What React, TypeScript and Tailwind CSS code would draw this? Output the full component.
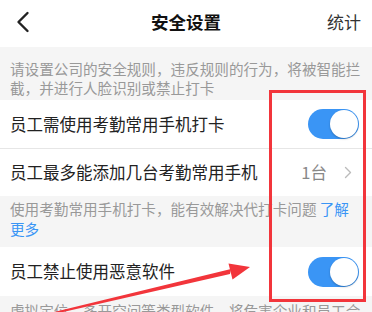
import React from 'react';

const Toggle: React.FC = () => (
  <div className="relative w-[51px] h-[30px] rounded-full bg-[#3a95f5]">
    <div className="absolute right-[1px] top-[1px] w-[28px] h-[28px] rounded-full bg-white shadow-[0_1px_2px_rgba(0,0,0,0.25)]" />
  </div>
);

export default function App() {
  return (
    <div
      className="relative w-[372px] h-[312px] overflow-hidden bg-white"
      style={{ fontFamily: '"Noto Sans CJK SC", "Noto Sans", sans-serif' }}
    >
      {/* Header */}
      <div className="relative h-[47px] flex items-center justify-center">
        <svg className="absolute left-[15px] top-[11px]" width="16" height="22" viewBox="0 0 16 22">
          <path d="M12.5 2 L3.5 11 L12.5 20" fill="none" stroke="#222" strokeWidth="2.4" strokeLinecap="round" strokeLinejoin="round" />
        </svg>
        <div className="text-[17.5px] font-bold text-[#111] leading-none -mt-[3px]">安全设置</div>
        <div className="absolute right-[11px] top-[13px] text-[17px] text-[#333] leading-none">统计</div>
      </div>

      {/* Description */}
      <div className="bg-[#f5f5f5] pl-[10px] pr-[6px] pt-[12px] pb-[3px] text-[14.6px] leading-[19px] text-[#999]">
        请设置公司的安全规则，违反规则的行为，将被智能拦截，并进行人脸识别或禁止打卡
      </div>

      {/* Row 1 */}
      <div className="h-[49px] flex items-center justify-between pl-[10px] pr-[13px] border-b border-[#e6e6e6]">
        <span className="text-[16.5px] text-[#222]">员工需使用考勤常用手机打卡</span>
        <Toggle />
      </div>

      {/* Row 2 */}
      <div className="h-[47px] flex items-center justify-between pl-[10px] pr-[20px]">
        <span className="text-[16.5px] text-[#222]">员工最多能添加几台考勤常用手机</span>
        <div className="flex items-center gap-[17px]">
          <span className="text-[16.5px] text-[#888]">1台</span>
          <svg width="8" height="13" viewBox="0 0 8 13">
            <path d="M1.5 1.5 L6.5 6.5 L1.5 11.5" fill="none" stroke="#bbb" strokeWidth="1.4" strokeLinecap="round" strokeLinejoin="round" />
          </svg>
        </div>
      </div>

      {/* Description 2 */}
      <div className="bg-[#f5f5f5] pl-[10px] pr-[20px] pt-[3px] pb-[8px] text-[14.6px] leading-[20px] text-[#999]">
        使用考勤常用手机打卡，能有效解决代打卡问题 <span className="text-[#3a95f5]">了解更多</span>
      </div>

      {/* Row 3 */}
      <div className="h-[49px] flex items-center justify-between pl-[10px] pr-[13px]">
        <span className="text-[16.5px] text-[#222]">员工禁止使用恶意软件</span>
        <Toggle />
      </div>

      {/* Description 3 */}
      <div className="bg-[#f5f5f5] pl-[10px] pr-[6px] pt-[5px] pb-[8px] text-[14.6px] leading-[20px] text-[#999]">
        虚拟定位、多开空间等类型软件，将危害企业和员工合法权益
      </div>

      {/* Annotation: red box */}
      <div className="absolute left-[269px] top-[90px] w-[97px] h-[212px] border-[3px] border-[#f2353b]" />

      {/* Annotation: red arrow */}
      <svg className="absolute left-0 top-0" width="372" height="312" viewBox="0 0 372 312">
        <polygon points="231,269 230,274 50,315 50,313" fill="#f2353b" />
        <polygon points="250,267 228.5,263.5 232.5,279.5" fill="#f2353b" />
      </svg>
    </div>
  );
}
